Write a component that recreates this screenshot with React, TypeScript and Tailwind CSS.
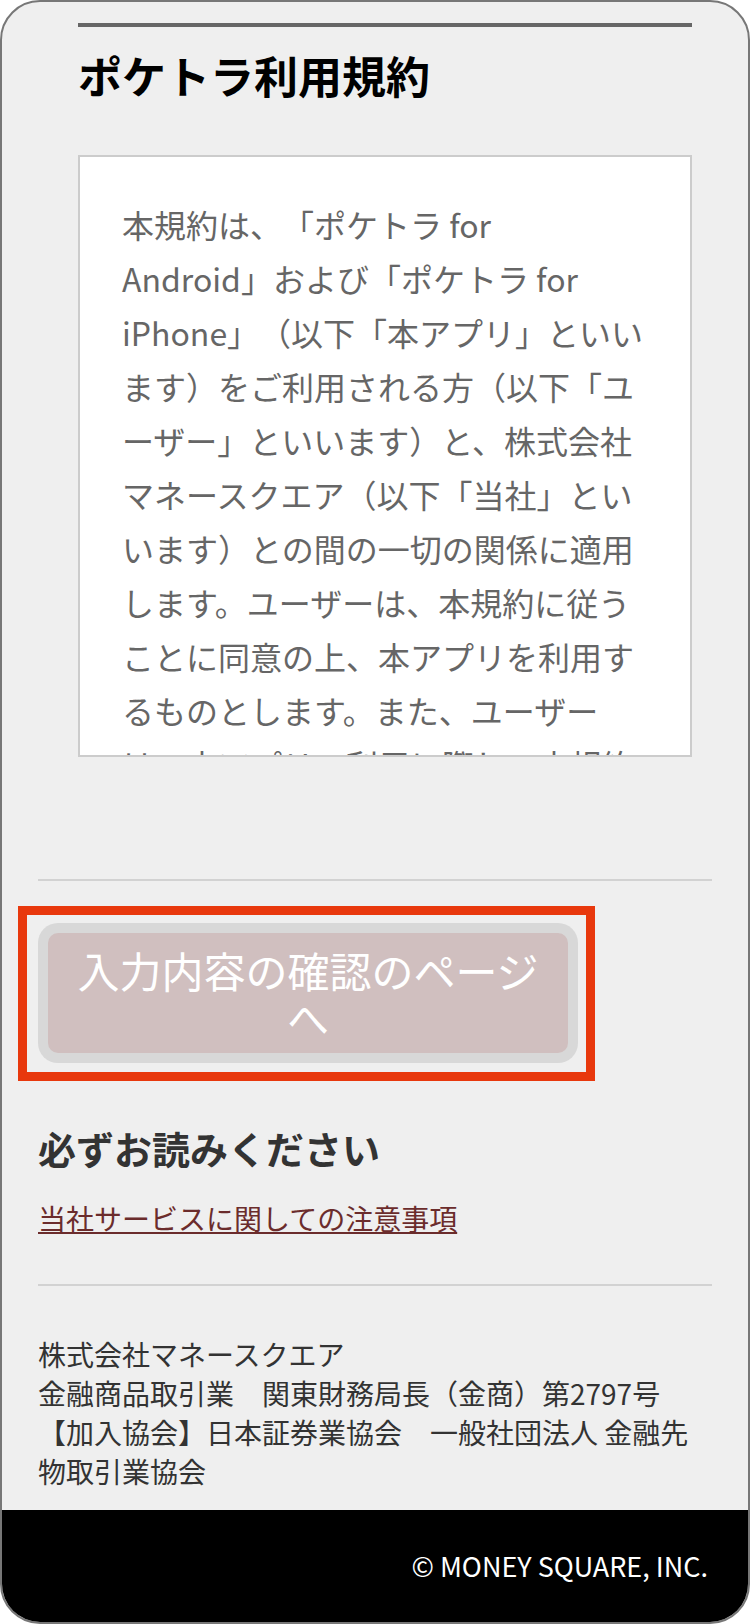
import React from 'react';

const termsText =
    '本規約は、「ポケトラ for Android」および「ポケトラ for iPhone」（以下「本アプリ」といいます）をご利用される方（以下「ユーザー」といいます）と、株式会社マネースクエア（以下「当社」といいます）との間の一切の関係に適用します。ユーザーは、本規約に従うことに同意の上、本アプリを利用するものとします。また、ユーザーは、本アプリの利用に際し、本規約の内容を遵守するものとします。';

const App: React.FC = () => {
    return (
        <div className="min-h-screen bg-white font-['Noto_Sans_CJK_JP','Noto_Sans',sans-serif] [text-spacing-trim:space-all]" lang="ja">
            <div className="flex h-[1624px] w-[750px] flex-col overflow-hidden rounded-[40px] border-2 border-[#777] bg-[#efefef]">
                <main className="px-[36px] pt-[21px]">
                    {/* Terms section */}
                    <section className="ml-[40px] mr-[20px]">
                        <div className="h-[4px] bg-[#666]" />
                        <h1 className="mt-[22px] text-[44px] font-bold leading-[53px] text-black">ポケトラ利用規約</h1>
                        <div className="mt-[53px] h-[602px] overflow-hidden border-2 border-[#ccc] bg-white px-[42px] pt-[40px]">
                            <p className="text-[32px] leading-[54px] text-[#666]">{termsText}</p>
                        </div>
                    </section>

                    <div className="mt-[122px] h-[2px] bg-[#d2d2d2]" />

                    {/* Confirm button */}
                    <div className="relative mt-[42px] w-[540px] rounded-[20px] bg-[#d8d8d8] p-[10px]">
                        <button className="block w-full rounded-[10px] bg-[#d0bfbf] px-[16px] py-[13px] text-center text-[42px] leading-[47px] text-white">
                            入力内容の確認のページへ
                        </button>
                        <div className="pointer-events-none absolute -left-[20px] -top-[17px] h-[175px] w-[577px] border-[9px] border-[#e8380d]" />
                    </div>

                    <h2 className="mt-[60px] text-[38px] font-bold leading-[49px] text-[#333]">必ずお読みください</h2>
                    <a href="#" className="mt-[26px] block w-fit text-[28px] leading-[40px] text-[#6b2c2c] underline">
                        当社サービスに関しての注意事項
                    </a>

                    <div className="mt-[46px] h-[2px] bg-[#d2d2d2]" />

                    <p className="mt-[49px] text-[28px] leading-[39px] text-[#333]">
                        株式会社マネースクエア
                        <br />
                        金融商品取引業　関東財務局長（金商）第2797号
                        <br />
                        【加入協会】日本証券業協会　一般社団法人 金融先物取引業協会
                    </p>
                </main>

                <footer className="mt-[19px] flex flex-1 items-center justify-end bg-black pr-[40px]">
                    <span className="text-[27px] text-white">© MONEY SQUARE, INC.</span>
                </footer>
            </div>
        </div>
    );
};

export default App;
